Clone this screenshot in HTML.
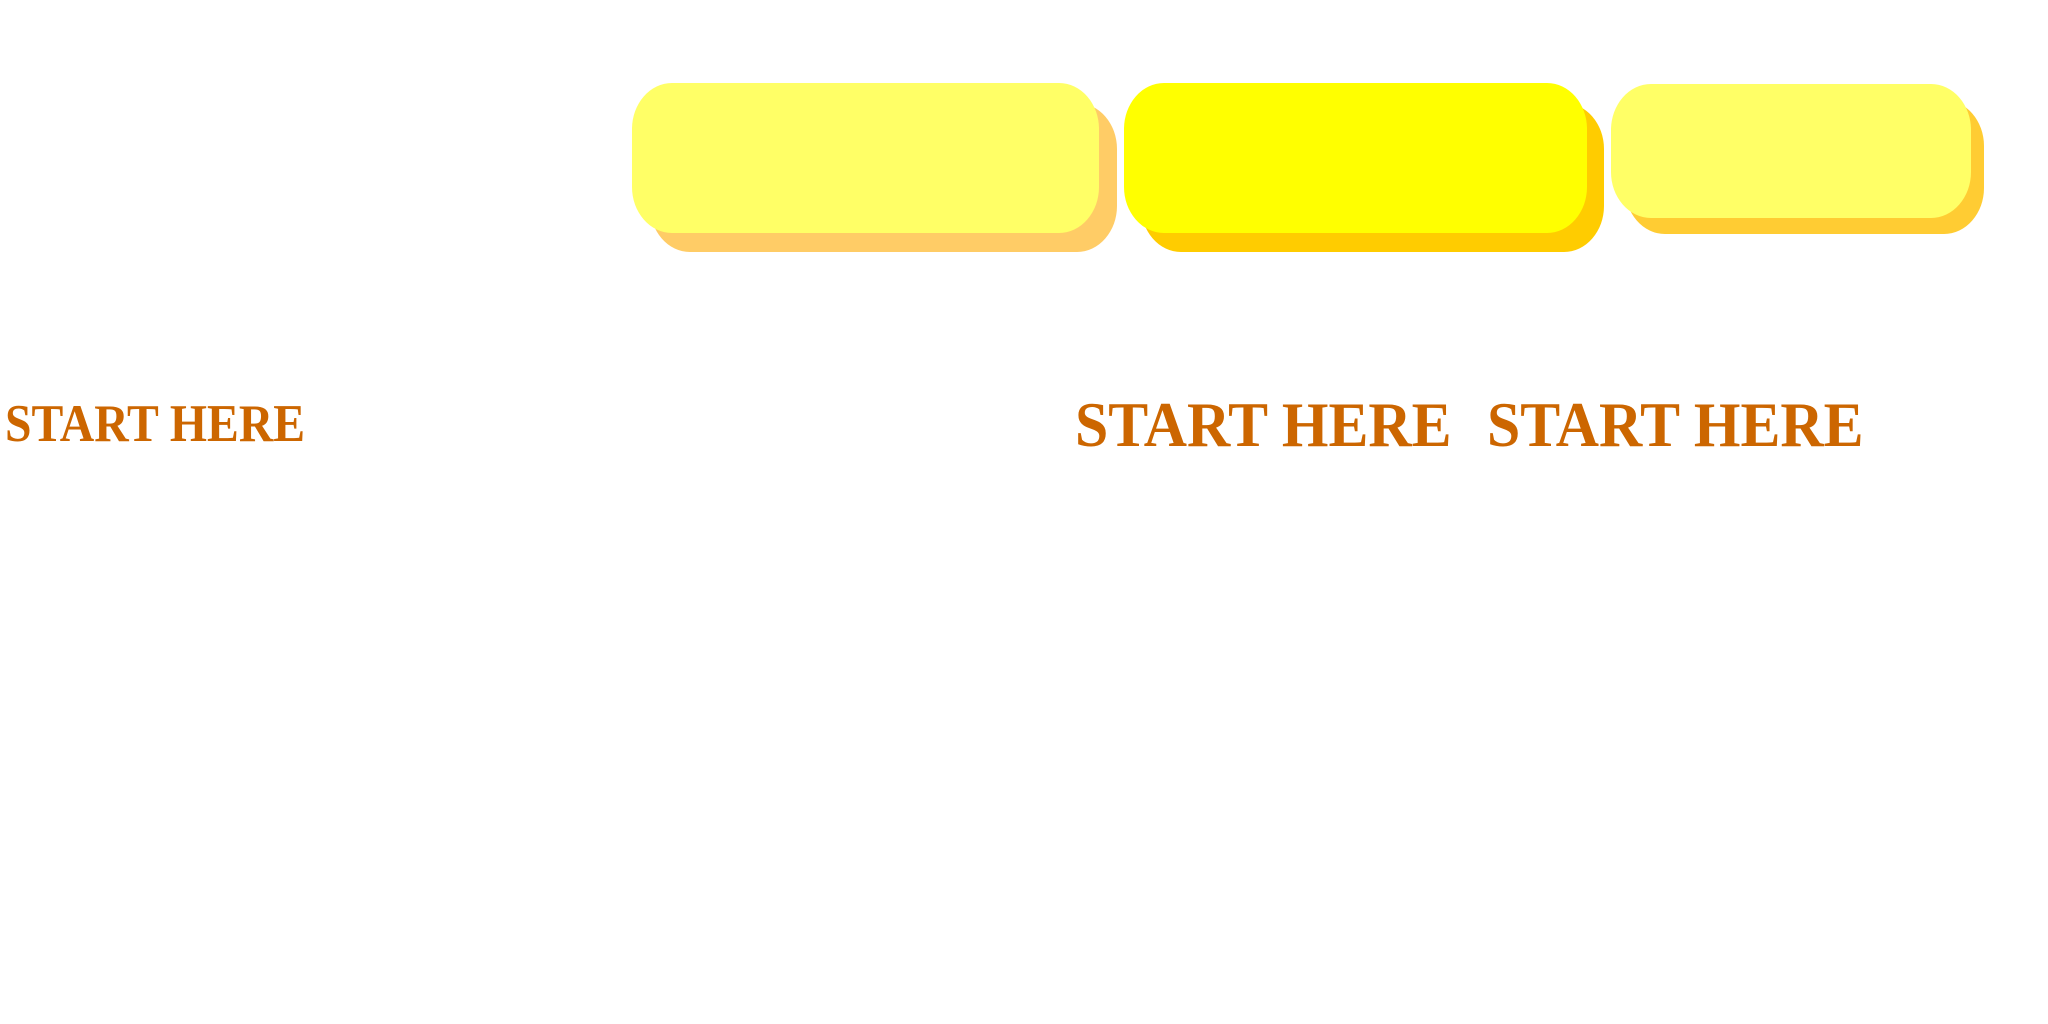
<!DOCTYPE html>
<html><head><style>
html,body{margin:0;padding:0;background:#fff;width:2048px;height:1024px;overflow:hidden;position:relative}
.b{position:absolute;border-radius:40px/46px}
.t{position:absolute;font-family:"Liberation Serif",serif;font-weight:bold;color:#cc6600;white-space:nowrap;transform-origin:0 0;line-height:1}
</style></head><body>
<div class="b" style="left:650px;top:103px;width:467px;height:149px;background:#ffcc66"></div>
<div class="b" style="left:632px;top:83px;width:467px;height:150px;background:#ffff66"></div>
<div class="b" style="left:1141px;top:103px;width:463px;height:149px;background:#ffcc00"></div>
<div class="b" style="left:1124px;top:83px;width:463px;height:150px;background:#ffff00"></div>
<div class="b" style="left:1625px;top:100px;width:359px;height:134px;background:#ffcc33"></div>
<div class="b" style="left:1611px;top:84px;width:360px;height:134px;background:#ffff66"></div>
<div class="t" style="left:5px;top:398px;font-size:53px;transform:scaleX(0.9)">START HERE</div>
<div class="t" style="left:1075px;top:394px;font-size:63px;transform:scaleX(0.95)">START HERE</div>
<div class="t" style="left:1487px;top:394px;font-size:63px;transform:scaleX(0.95)">START HERE</div>
</body></html>
